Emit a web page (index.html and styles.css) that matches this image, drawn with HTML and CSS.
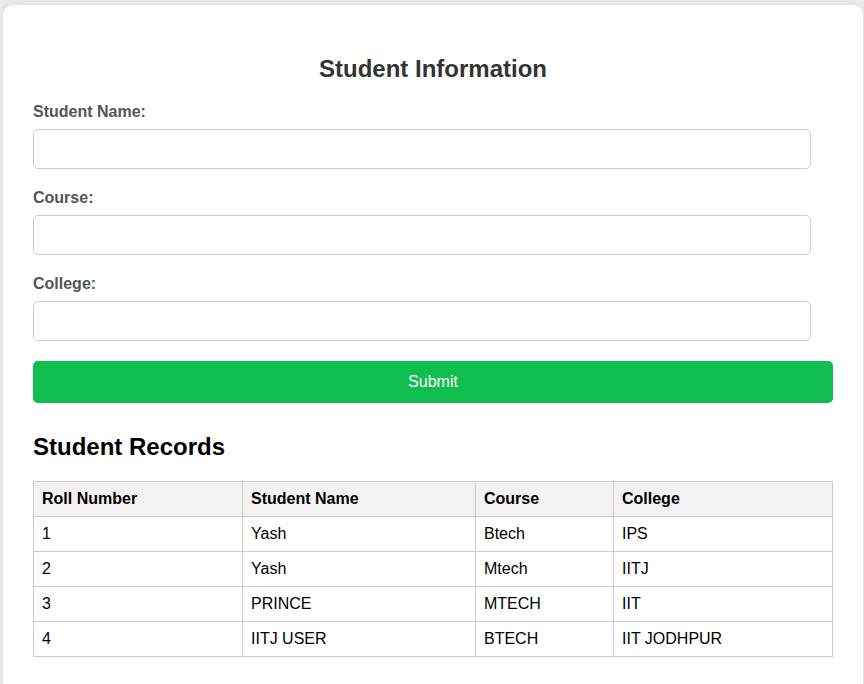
FILE: index.html
```html
<!DOCTYPE html>
<html lang="en">
<head>
<meta charset="utf-8">
<title>Student Information</title>
<link rel="stylesheet" href="styles.css">
</head>
<body>
<div class="card">
  <h2 class="title">Student Information</h2>
  <form class="form">
    <label class="label" for="name">Student Name:</label>
    <input class="input" id="name" type="text">
    <label class="label" for="course">Course:</label>
    <input class="input" id="course" type="text">
    <label class="label" for="college">College:</label>
    <input class="input" id="college" type="text">
    <button class="submit" type="button">Submit</button>
  </form>
  <h2 class="records-title">Student Records</h2>
  <table class="records">
    <colgroup>
      <col class="c1"><col class="c2"><col class="c3"><col class="c4">
    </colgroup>
    <thead>
      <tr><th>Roll Number</th><th>Student Name</th><th>Course</th><th>College</th></tr>
    </thead>
    <tbody>
      <tr><td>1</td><td>Yash</td><td>Btech</td><td>IPS</td></tr>
      <tr><td>2</td><td>Yash</td><td>Mtech</td><td>IITJ</td></tr>
      <tr><td>3</td><td>PRINCE</td><td>MTECH</td><td>IIT</td></tr>
      <tr><td>4</td><td>IITJ USER</td><td>BTECH</td><td>IIT JODHPUR</td></tr>
    </tbody>
  </table>
</div>
</body>
</html>
```
FILE: styles.css
```css
html, body {
  margin: 0;
  padding: 0;
}
body {
  background: #ececec;
  font-family: "Liberation Sans", Arial, sans-serif;
  font-size: 16px;
  padding-top: 5px;
  height: 684px;
  overflow: hidden;
  box-sizing: border-box;
}
.card {
  margin: 0 1px 0 3px;
  background: #fff;
  border-radius: 10px;
  box-shadow: 0 0 8px rgba(0, 0, 0, 0.08);
  padding: 30px 30px 40px 30px;
  width: 800px;
}
.title {
  margin: 20px 0 20px 0;
  text-align: center;
  font-size: 24px;
  line-height: 28px;
  color: #333;
  font-weight: bold;
}
.form {
  display: flex;
  flex-direction: column;
  align-items: flex-start;
}
.label {
  display: block;
  font-weight: bold;
  color: #555;
  line-height: 18px;
  margin-bottom: 8px;
}
.input {
  box-sizing: border-box;
  width: 778px;
  height: 40px;
  border: 1px solid #ccc;
  border-radius: 5px;
  margin: 0 0 20px 0;
  padding: 10px;
  font-size: 16px;
  font-family: inherit;
}
.submit {
  width: 800px;
  height: 42px;
  border: none;
  border-radius: 5px;
  background: #10be50;
  color: #fff;
  font-size: 16px;
  font-family: inherit;
  padding: 0;
}
.records-title {
  margin: 30px 0 20px 0;
  font-size: 24px;
  line-height: 28px;
  color: #000;
  font-weight: bold;
}
.records {
  width: 799px;
  border-collapse: collapse;
  table-layout: fixed;
}
.c1 { width: 209px; }
.c2 { width: 233px; }
.c3 { width: 138px; }
.c4 { width: 219px; }
.records th,
.records td {
  border: 1px solid #ccc;
  padding: 8px;
  text-align: left;
  line-height: 18px;
  color: #000;
}
.records th {
  background: #f2f2f2;
  font-weight: bold;
}
```
